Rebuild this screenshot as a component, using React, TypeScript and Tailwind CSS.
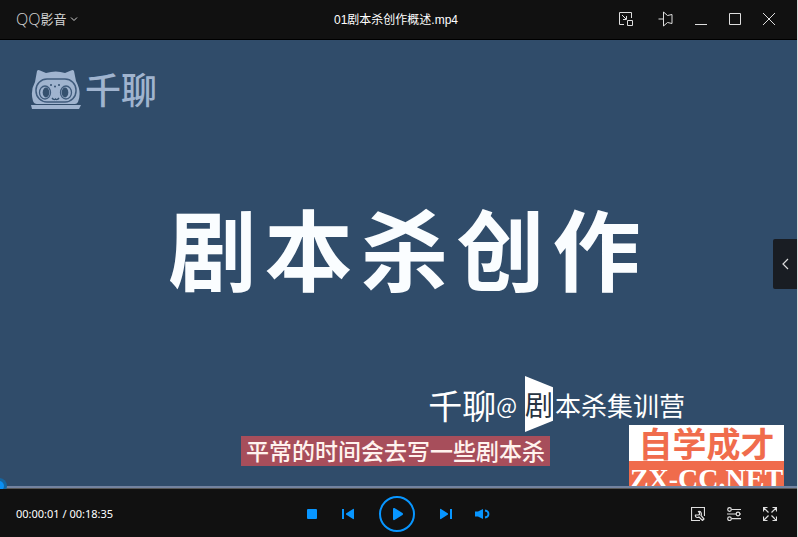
import React from "react";

const ui = "font-['Liberation_Sans','Noto_Sans_CJK_SC',sans-serif]";
const cjk = "font-['Noto_Sans_CJK_SC',sans-serif]";

function IconButton({ label, className = "", children }: { label: string; className?: string; children: React.ReactNode }) {
  return (
    <button type="button" aria-label={label} className={`flex shrink-0 items-center justify-center ${className}`}>
      {children}
    </button>
  );
}

function TitleBar() {
  const line = { fill: "none", stroke: "currentColor", strokeWidth: 1 };
  return (
    <header className="grid h-10 shrink-0 grid-cols-[1fr_auto_1fr] items-center border-b border-black bg-[#111111] pr-[21px] pb-0.5 pl-4">
      <button type="button" className="flex items-center justify-self-start text-[#d4d4d4]">
        <span className="font-['Open_Sans',sans-serif] text-base leading-5 font-light">QQ</span>
        <span className={`${cjk} text-[13px] leading-5`}>影音</span>
        <svg className="ml-1 h-2 w-2" viewBox="0 0 8 8" {...line}>
          <path d="M1 2.5 4 5.5 7 2.5" />
        </svg>
      </button>
      <h1 className={`${ui} pt-0.5 text-xs text-white`}>01剧本杀创作概述.mp4</h1>
      <div className="flex items-center gap-5 justify-self-end text-[#dedede]">
        <IconButton label="迷你模式" className="mr-1 w-4">
          <svg className="h-4 w-4" viewBox="0 0 16 16" {...line}>
            <path d="M6 13.5H1.5v-12h12V7M4 4l4 4M8.500 5v3.500H5M9.500 9.500h5v5h-5z" />
          </svg>
        </IconButton>
        <IconButton label="置顶" className="w-4">
          <svg className="h-4 w-4" viewBox="0 0 16 16" {...line}>
            <path d="M.500 8H5M5.500 1v14l4-3.500 4.500 1v-9l-4.500 1-4-3.500" />
          </svg>
        </IconButton>
        <IconButton label="最小化" className="w-3.5">
          <svg className="h-4 w-3.5" viewBox="0 0 14 16" {...line}>
            <path d="M1 13.500h12" />
          </svg>
        </IconButton>
        <IconButton label="最大化" className="w-3.5">
          <svg className="h-4 w-3.5" viewBox="0 0 14 16" {...line}>
            <path d="M1.500 2.500h11v11h-11z" />
          </svg>
        </IconButton>
        <IconButton label="关闭" className="w-3.5">
          <svg className="h-4 w-3.5" viewBox="0 0 14 16" {...line}>
            <path d="M1 2l12 12M13 2L1 14" />
          </svg>
        </IconButton>
      </div>
    </header>
  );
}

function Mascot() {
  return (
    <svg className="h-10 w-[50px]" viewBox="0 0 50 40">
      <path
        fill="#a0b4cf"
        d="M6 1Q7-.5 9 .5L15 3Q25 0 34 3L40 .5Q42-.5 43 1L45 11Q51 22 47 32Q46 34 44 34H6Q3 34 2 31Q-1 21 4 12Z"
      />
      <path fill="#a0b4cf" d="M0 35H50L48 39H1Z" />
      <rect x="5" y="9" width="40" height="23" rx="11" fill="#a0b4cf" stroke="#3f5b7c" strokeWidth="1.500" />
      <g fill="#a0b4cf" stroke="#3f5b7c" strokeWidth="1.300">
        <ellipse cx="14" cy="22.500" rx="5.500" ry="6.500" />
        <ellipse cx="35" cy="22.500" rx="5.500" ry="6.500" />
      </g>
      <g fill="#35516f">
        <ellipse cx="15" cy="22.500" rx="3.300" ry="5" />
        <ellipse cx="34" cy="22.500" rx="3.300" ry="5" />
        <circle cx="20" cy="15" r="1" />
        <circle cx="24" cy="16.500" r="1" />
        <circle cx="28" cy="15" r="1" />
      </g>
      <path fill="none" stroke="#35516f" strokeWidth="1.300" d="M21 28Q23 30.500 24.500 29Q26 30.500 28 28" />
    </svg>
  );
}

function VideoFrame() {
  return (
    <main className={`${cjk} relative flex min-h-0 flex-1 flex-col bg-[#304c6a] text-white`}>
      <div className="flex items-start pt-[30px] pl-[31px]">
        <Mascot />
        <span className="ml-1 text-4xl leading-9 font-medium text-[#a0b4cf]">千聊</span>
      </div>
      <h2 className="mt-[84px] flex justify-center gap-2 pl-3 text-[88px] leading-[104px] font-bold text-[#fafdff]">
        {[..."剧本杀创作"].map((glyph) => (
          <span key={glyph}>{glyph}</span>
        ))}
      </h2>

      <div className="absolute right-[112px] bottom-[50px] flex h-16 items-center">
        <span className="text-[34px]">千聊</span>
        <span className="text-[22px]">@</span>
        <span className="ml-2 flex h-14 w-7 items-center justify-center bg-white text-[28px] text-[#273442] [clip-path:polygon(0_0,100%_20%,100%_80%,0_100%)]">
          剧
        </span>
        <span className="ml-0.5 text-[26px]">本杀集训营</span>
      </div>

      <p className="absolute bottom-5 left-[241px] bg-[#a74e5b] px-[5px] pb-0.5 text-[23px] leading-7 font-medium text-[#fff3ee]">
        平常的时间会去写一些剧本杀
      </p>

      <div className="absolute right-[13px] bottom-0 h-[61px] w-[155px] bg-[#f06c4c] text-center">
        <div className="h-9 bg-white text-[34px] leading-9 font-bold text-[#f06c4c]">自学成才</div>
        <div className="h-[25px] font-['Liberation_Serif',serif] text-[28px] leading-9 font-bold">ZX-CC.NET</div>
      </div>

      <IconButton label="展开播放列表" className="absolute top-[199px] right-0 h-[50px] w-6 rounded-l-xs bg-[#191d23] text-[#dddddd]">
        <svg className="h-3 w-2" viewBox="0 0 8 12" fill="none" stroke="currentColor" strokeWidth="1.200">
          <path d="M7 1 2 6l5 5" />
        </svg>
      </IconButton>
    </main>
  );
}

function SeekBar() {
  return (
    <div className="relative z-10 h-[3px] shrink-0 border-b border-[#565656] bg-[#7383a0]">
      <div aria-hidden="true" className="absolute -top-2 -left-1.5 flex h-4 w-3 items-center">
        <span className="h-2.5 w-2.5 shrink-0 rounded-full bg-[#0a90f5] ring-3 ring-[#17659f]" />
      </div>
      <input
        type="range"
        aria-label="播放进度"
        min={0}
        max={1115}
        defaultValue={1}
        className="absolute inset-x-0 -top-1.5 m-0 h-4 w-full opacity-0"
      />
    </div>
  );
}

function Controls() {
  const line = { fill: "none", stroke: "currentColor", strokeWidth: 1.2 };
  return (
    <footer className="relative z-10 grid h-12 shrink-0 grid-cols-[1fr_auto_1fr] items-center bg-[#111111] pt-0.5 pr-5 pl-4">
      <div className="font-['Noto_Sans',sans-serif] text-[11px] text-white">00:00:01 / 00:18:35</div>
      <div className="flex items-center gap-4 text-[#0896ff]">
        <IconButton label="停止" className="h-5 w-5">
          <svg className="h-5 w-5" viewBox="0 0 20 20" fill="currentColor">
            <rect x="5" y="5" width="10" height="10" rx="1" />
          </svg>
        </IconButton>
        <IconButton label="上一个" className="h-5 w-5">
          <svg className="h-5 w-5" viewBox="0 0 20 20" fill="currentColor">
            <path d="M4 5h2v10H4zM16 5.500v9q0 1-1 .500L8 10.500v-1L15 5q1-.500 1 .500z" />
          </svg>
        </IconButton>
        <IconButton label="播放" className="mx-[5px] h-9 w-9 rounded-full border-2 border-[#0896ff]">
          <svg className="h-5 w-5" viewBox="0 0 20 20" fill="currentColor">
            <path d="M6 5q0-1.500 1.500-1L15.500 9q1 1 0 2L7.500 16Q6 16.500 6 15z" />
          </svg>
        </IconButton>
        <IconButton label="下一个" className="h-5 w-5">
          <svg className="h-5 w-5" viewBox="0 0 20 20" fill="currentColor">
            <path d="M14 5h2v10h-2zM4 5.500v9q0 1 1 .500L12 10.500v-1L5 5q-1-.500-1 .500z" />
          </svg>
        </IconButton>
        <IconButton label="音量" className="h-5 w-5">
          <svg className="h-5 w-5" viewBox="0 0 20 20">
            <path fill="currentColor" d="M3 7.500h3L11 5v10L6 12.500H3z" />
            <path fill="none" stroke="currentColor" strokeWidth="1.800" d="M13 6.500Q16.500 7 16.500 10T13 13.500" />
          </svg>
        </IconButton>
      </div>
      <div className="flex items-center gap-[22px] justify-self-end text-[#dedede]">
        <IconButton label="工具箱" className="h-3.5 w-3.5">
          <svg className="h-3.5 w-3.5" viewBox="0 0 14 14" {...line}>
            <path d="M9 13.500H.500V.500h13V9M4.500 8Q4 9.500 5.500 10.300 6.800 10.800 8 10l3.500 3.500 1.500-1.500L10 8.500Q11 6.500 9.500 4.800 8.500 4 7.500 4.500L8.500 6v1.500L7 8Z" />
          </svg>
        </IconButton>
        <IconButton label="设置" className="h-3.5 w-3.5">
          <svg className="h-3.5 w-3.5" viewBox="0 0 14 14" {...line}>
            <circle cx="2.500" cy="2.500" r="1.800" />
            <circle cx="11" cy="7" r="1.800" />
            <circle cx="2.500" cy="11.700" r="1.800" />
            <path d="M4.500 2.500H14M0 7h9M13 7h1M4.500 11.700H14" />
          </svg>
        </IconButton>
        <IconButton label="全屏" className="h-3.5 w-3.5">
          <svg className="h-3.5 w-3.5" viewBox="0 0 14 14" {...line}>
            <path d="M.500 4.500v-4h4M9.500.500h4v4M13.500 9.500v4h-4M4.500 13.500h-4v-4M1 1l4.500 4.500M13 1 8.500 5.500M1 13l4.500-4.500M13 13 8.500 8.500" />
          </svg>
        </IconButton>
      </div>
    </footer>
  );
}

export default function App() {
  return (
    <div className="h-screen w-full overflow-hidden bg-[#dadada] pr-px">
      <div className="flex h-full flex-col overflow-hidden bg-black">
        <TitleBar />
        <VideoFrame />
        <SeekBar />
        <Controls />
      </div>
    </div>
  );
}
